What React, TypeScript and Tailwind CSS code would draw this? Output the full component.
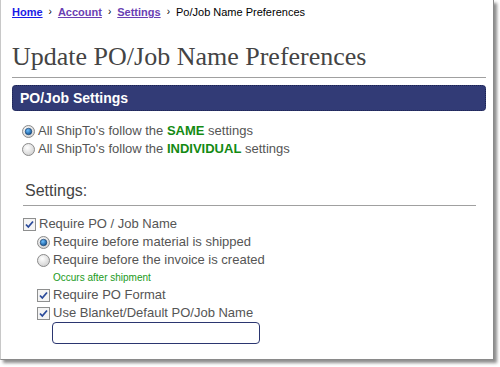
import React from "react";

function Radio({ checked }: { checked?: boolean }) {
  return (
    <svg width="13" height="13" viewBox="0 0 13 13" className="shrink-0 block">
      <defs>
        <radialGradient id={checked ? "rg1" : "rg0"} cx="40%" cy="35%" r="70%">
          <stop offset="0%" stopColor="#ffffff" />
          <stop offset="100%" stopColor="#cfcfcf" />
        </radialGradient>
        <radialGradient id="dot" cx="40%" cy="35%" r="70%">
          <stop offset="0%" stopColor="#6fc0ff" />
          <stop offset="100%" stopColor="#0b4c8c" />
        </radialGradient>
      </defs>
      <circle cx="6.5" cy="6.5" r="6" fill={`url(#${checked ? "rg1" : "rg0"})`} stroke="#8a8a8a" strokeWidth="1" />
      {checked && <circle cx="6.5" cy="6.5" r="3.3" fill="url(#dot)" stroke="#163a66" strokeWidth="0.6" />}
    </svg>
  );
}

function Check() {
  return (
    <svg width="13" height="13" viewBox="0 0 13 13" className="shrink-0 block">
      <rect x="0.5" y="0.5" width="12" height="12" fill="#f4f4f4" stroke="#8e8f8f" />
      <path d="M3 6.5 L5.3 9 L10 3.5" fill="none" stroke="#2a4a9a" strokeWidth="1.8" />
    </svg>
  );
}

function Row({ children }: { children: React.ReactNode }) {
  return <div className="flex items-center gap-[3px] h-[18px]">{children}</div>;
}

export default function App() {
  const font = { fontFamily: '"Liberation Sans", Arial, sans-serif' };
  return (
    <div className="w-[500px] h-[367px] bg-white" style={font}>
      <div className="w-[494px] h-[360px] bg-white border-l border-l-[#c8c8c8] border-r border-b border-r-[#8a8a8a] border-b-[#8a8a8a] shadow-[3px_3px_3px_rgba(0,0,0,0.45)] pl-[11px] pr-[7px]">
        <div className="flex items-center text-[11px] leading-[14px] pt-[5px] text-black">
          <a className="font-bold text-[#1b1be6] underline">Home</a>
          <span className="mx-[6px] text-[10px]">›</span>
          <a className="font-bold text-[#6a3fb3] underline">Account</a>
          <span className="mx-[6px] text-[10px]">›</span>
          <a className="font-bold text-[#6a3fb3] underline">Settings</a>
          <span className="mx-[6px] text-[10px]">›</span>
          <span>Po/Job Name Preferences</span>
        </div>
        <h1
          className="text-[26px] leading-[30px] text-[#444] mt-[23px] pb-[5px] border-b border-[#a0a0a0]"
          style={{ fontFamily: '"Liberation Serif", Georgia, serif' }}
        >
          Update PO/Job Name Preferences
        </h1>
        <div className="mt-[7px] h-[26px] rounded-[4px] bg-[#323b76] border border-dotted border-[#1c2350] flex items-center pl-[7px] text-white font-bold text-[14px]">
          PO/Job Settings
        </div>
        <div className="text-[13px] leading-[18px] text-[#555] mt-[11px] pl-[10px]">
          <Row>
            <Radio checked />
            <span>
              All ShipTo's follow the <b className="text-[#138a13]">SAME</b> settings
            </span>
          </Row>
          <Row>
            <Radio />
            <span>
              All ShipTo's follow the <b className="text-[#138a13]">INDIVIDUAL</b> settings
            </span>
          </Row>
        </div>
        <div className="ml-[11px] mr-[10px] mt-[23px] text-[16px] leading-[20px] text-[#444] pl-[2px] pb-[4px] border-b border-[#a0a0a0]">
          Settings:
        </div>
        <div className="text-[13px] leading-[18px] text-[#555] mt-[9px] pl-[11px]">
          <Row>
            <Check />
            <span>Require PO / Job Name</span>
          </Row>
          <div className="pl-[14px]">
            <Row>
              <Radio checked />
              <span>Require before material is shipped</span>
            </Row>
            <Row>
              <Radio />
              <span>Require before the invoice is created</span>
            </Row>
            <div className="pl-[16px] text-[10px] leading-[17px] text-[#1a9a1a]">Occurs after shipment</div>
            <Row>
              <Check />
              <span>Require PO Format</span>
            </Row>
            <Row>
              <Check />
              <span>Use Blanket/Default PO/Job Name</span>
            </Row>
            <input
              type="text"
              className="block ml-[15px] w-[208px] h-[22px] rounded-[4px] border border-[#2b3670] bg-white outline-none"
            />
          </div>
        </div>
      </div>
    </div>
  );
}
